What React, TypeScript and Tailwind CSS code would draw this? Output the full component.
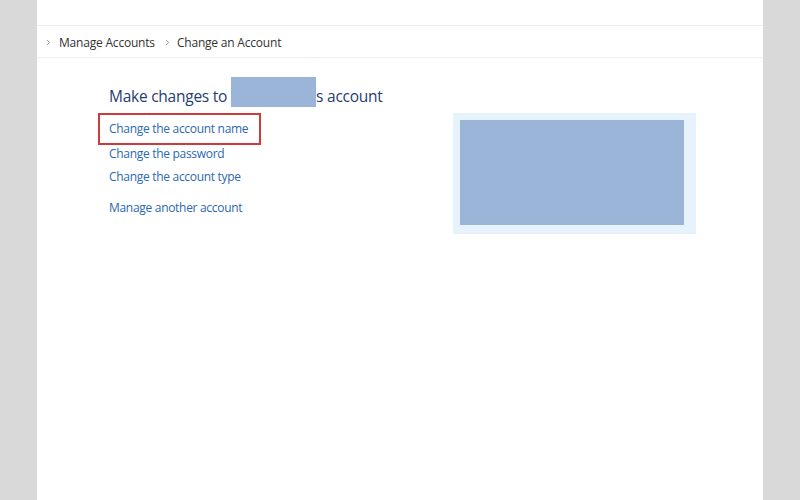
import { ChevronRight } from "lucide-react";

const links = [
  { label: "Change the account name", boxed: true },
  { label: "Change the password" },
  { label: "Change the account type" },
];

export default function App() {
  return (
    <div className="w-[800px] h-[500px] bg-[#d9d9d9] flex justify-center overflow-hidden" style={{ fontFamily: '"Open Sans", "Liberation Sans", sans-serif' }}>
      <div className="w-[726px] h-full bg-white flex flex-col">
        {/* title bar area */}
        <div className="h-[26px] border-b border-[#ececec]" />

        {/* Breadcrumb */}
        <div className="h-[32px] border-b border-[#efefef] flex items-center pt-[2px] pl-[7px] text-[12px] text-[#333] tracking-[-0.2px]">
          <ChevronRight className="w-[9px] h-[9px] text-[#777]" strokeWidth={2} />
          <span className="ml-[6px]">Manage Accounts</span>
          <ChevronRight className="w-[9px] h-[9px] text-[#777] ml-[8px]" strokeWidth={2} />
          <span className="ml-[5px] tracking-[-0.2px]">Change an Account</span>
        </div>

        {/* Body */}
        <div className="flex pt-[19px]">
          <div className="pl-[72px] w-[416px]">
            <div className="flex items-end h-[30px] text-[15.5px] text-[#1f3d70] tracking-[-0.25px] leading-[22px]">
              <span>Make changes to</span>
              <span className="self-stretch w-[85px] bg-[#9bb5d9] ml-[4px]" />
              <span>s account</span>
            </div>

            <div className="mt-[6px] flex flex-col text-[12px] text-[#2a68b0] tracking-[-0.3px]">
              {links.map((l) =>
                l.boxed ? (
                  <div key={l.label} className="-ml-[11px] w-[163px] h-[32px] border-2 border-[#cf3a3c] flex items-center pl-[9px] mb-[-3px]">
                    {l.label}
                  </div>
                ) : (
                  <div key={l.label} className="h-[23px] flex items-center">
                    {l.label}
                  </div>
                )
              )}
              <div className="h-[23px] mt-[8px] flex items-center">Manage another account</div>
            </div>
          </div>

          <div className="mt-[36px] w-[243px] h-[121px] bg-[#e6f2fc] pl-[7px] pr-[12px] pt-[7px] pb-[9px]">
            <div className="w-full h-full bg-[#9bb5d9]" />
          </div>
        </div>
      </div>
    </div>
  );
}
